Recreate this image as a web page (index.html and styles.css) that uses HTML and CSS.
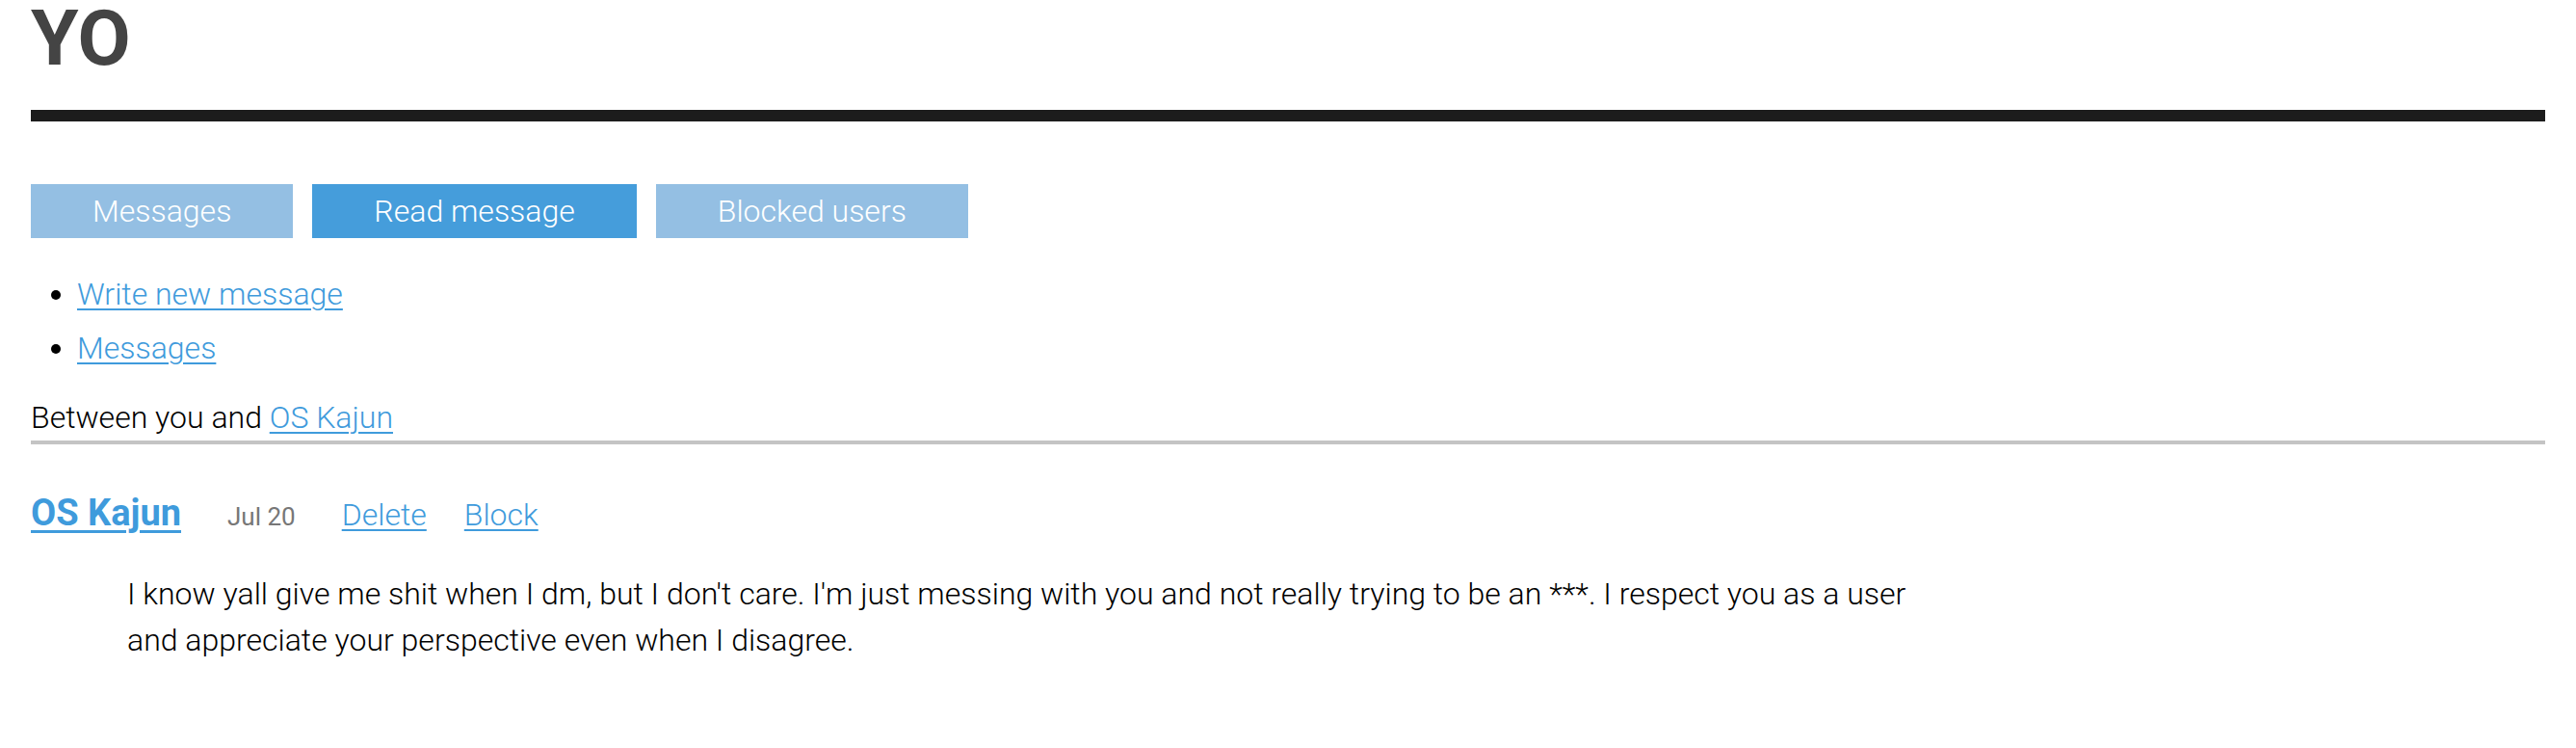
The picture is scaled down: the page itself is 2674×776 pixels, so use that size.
FILE: index.html
```html
<!DOCTYPE html>
<html lang="en">
<head>
<meta charset="utf-8">
<title>YO</title>
<link rel="stylesheet" href="styles.css">
</head>
<body>
<div class="page">
  <h1 class="title">YO</h1>
  <div class="rule-thick"></div>
  <nav class="tabs">
    <a class="tab" href="#">Messages</a>
    <a class="tab tab-active" href="#">Read message</a>
    <a class="tab" href="#">Blocked users</a>
  </nav>
  <ul class="actions">
    <li><a class="link" href="#">Write new message</a></li>
    <li><a class="link" href="#">Messages</a></li>
  </ul>
  <p class="between">Between you and <a class="link" href="#">OS Kajun</a></p>
  <div class="thread">
    <article class="message">
      <header class="msg-head">
        <a class="author" href="#">OS Kajun</a>
        <span class="date">Jul 20</span>
        <a class="link msg-delete" href="#">Delete</a>
        <a class="link msg-block" href="#">Block</a>
      </header>
      <p class="msg-body">I know yall give me shit when I dm, but I don't care. I'm just messing with you and not really trying to be an ***. I respect you as a user and appreciate your perspective even when I disagree.</p>
    </article>
  </div>
</div>
</body>
</html>
```

FILE: styles.css
```css
html, body {
  margin: 0;
  padding: 0;
  background: #ffffff;
}

body {
  font-family: Roboto, "Liberation Sans", sans-serif;
  font-weight: 300;
  font-size: 32px;
  color: #111111;
}

.page {
  padding: 0 32px 40px 32px;
}

.title {
  margin: 0;
  font-size: 80px;
  line-height: 80px;
  font-weight: 700;
  color: #444444;
}

.rule-thick {
  margin-top: 34px;
  height: 12px;
  background: #1c1c1c;
}

.tabs {
  display: flex;
  gap: 20px;
  margin-top: 65px;
}

.tab {
  display: block;
  padding: 12px 64px;
  line-height: 32px;
  color: #ffffff;
  text-decoration: none;
  background: #94bfe3;
}

.tab-active {
  background: #459ddb;
}

.link {
  color: #3f9bdc;
  text-decoration: underline;
  text-underline-offset: 4px;
  text-decoration-thickness: 2px;
}

.actions {
  margin: 30px 0 20px 0;
  padding-left: 48px;
  list-style: disc;
}

.actions li {
  line-height: 56px;
  color: #000000;
}

.between {
  margin: 0;
  line-height: 48px;
  color: #000000;
}

.thread {
  border-top: 4px solid #c4c4c4;
}

.message {
  padding-top: 49px;
}

.msg-head {
  display: flex;
  align-items: baseline;
}

.author {
  font-size: 38px;
  font-weight: 700;
  color: #3f9bdc;
  text-decoration: underline;
  text-underline-offset: 5px;
  text-decoration-thickness: 3px;
}

.date {
  margin-left: 48px;
  font-size: 26px;
  font-weight: 400;
  color: #777777;
}

.msg-delete {
  margin-left: 48px;
}

.msg-block {
  margin-left: 39px;
}

.msg-body {
  margin: 38px 0 0 100px;
  max-width: 1870px;
  line-height: 48px;
  color: #000000;
}
```
